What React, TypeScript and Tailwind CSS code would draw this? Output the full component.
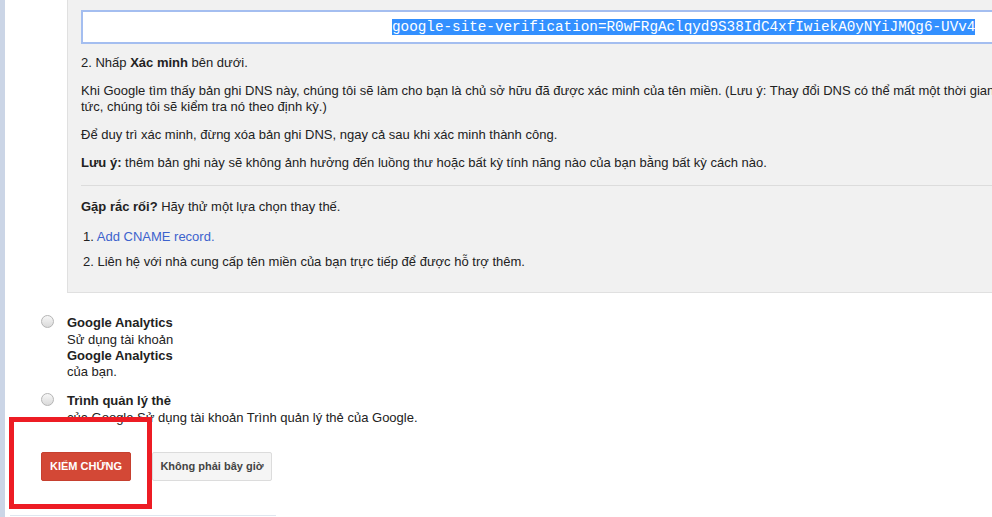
const TXT_RECORD = "google-site-verification=R0wFRgAclqyd9S38IdC4xfIwiekA0yNYiJMQg6-UVv4";

export default function App() {
  return (
    <div className="relative flex h-[517px] w-full overflow-hidden bg-white font-['Liberation_Sans',Arial,sans-serif] text-[13px] text-[#222]">
      <div className="w-[5px] shrink-0 bg-[#cbd5e6]" />
      <main className="min-w-0 flex-1">
        <VerifyPanel />
        <MethodList />
        <div className="mt-[26px] flex gap-[21px] pl-[36px]">
          <button className="h-[29px] w-[90px] rounded-[2px] border border-[#c6402f] bg-[#d34836] text-[11px] font-bold text-white">
            KIỂM CHỨNG
          </button>
          <button className="h-[29px] w-[120px] rounded-[2px] border border-[#dcdcdc] bg-[#f5f5f5] text-[11px] font-bold text-[#444]">
            Không phải bây giờ
          </button>
        </div>
        <div className="ml-[5px] mt-[34px] w-[266px] border-t border-[#dfe6ef]" />
      </main>

      {/* annotation box drawn over the page */}
      <div className="pointer-events-none absolute left-[9px] top-[417px] h-[92px] w-[143px] border-[5px] border-[#ed1c24]" />
    </div>
  );
}

function VerifyPanel() {
  return (
    <section className="ml-[62px] overflow-hidden border-b border-l border-[#e0e0e0] bg-[#f1f1f1] pb-[22px] pl-[13px] pt-[10px]">
      <div className="-mr-5 flex h-[34px] items-center whitespace-nowrap border-2 border-[#a4bef0] bg-white pl-[309px]">
        <span className="bg-[#3390ff] font-['Liberation_Mono','Courier_New',monospace] text-[14.3px] leading-[16px] text-white">
          {TXT_RECORD}
        </span>
      </div>

      <p className="mt-[11px] leading-[16px]">
        2. Nhấp <b>Xác minh</b> bên dưới.
      </p>
      <div className="mt-[12px] whitespace-nowrap leading-[16px]">
        <p>
          Khi Google tìm thấy bản ghi DNS này, chúng tôi sẽ làm cho bạn là chủ sở hữu đã được xác minh của tên miền. (Lưu ý: Thay đổi DNS có thể mất một thời gian để có hiệu lực. Nếu chúng tôi không tìm thấy bản ghi ngay lập
        </p>
        <p>tức, chúng tôi sẽ kiểm tra nó theo định kỳ.)</p>
      </div>
      <p className="mt-[12px] leading-[16px]">
        Để duy trì xác minh, đừng xóa bản ghi DNS, ngay cả sau khi xác minh thành công.
      </p>
      <p className="mt-[12px] leading-[16px]">
        <b>Lưu ý:</b> thêm bản ghi này sẽ không ảnh hưởng đến luồng thư hoặc bất kỳ tính năng nào của bạn bằng bất kỳ cách nào.
      </p>

      <div className="mt-[14px] h-px bg-[#dcdcdc]" />

      <p className="mt-[13px] leading-[16px]">
        <b>Gặp rắc rối?</b> Hãy thử một lựa chọn thay thế.
      </p>
      <ol className="mt-[14px] grid gap-[9px] pl-[2px] leading-[16px]">
        <li>
          1. <a className="text-[#3c62cd]">Add CNAME record.</a>
        </li>
        <li>2. Liên hệ với nhà cung cấp tên miền của bạn trực tiếp để được hỗ trợ thêm.</li>
      </ol>
    </section>
  );
}

function MethodList() {
  return (
    <div className="mt-[21px] grid gap-[12px] pl-[36px]">
      <RadioItem title="Google Analytics">
        <p className="leading-[17px]">Sử dụng tài khoản</p>
        <p className="font-bold leading-[15px]">Google Analytics</p>
        <p className="leading-[17px]">của bạn.</p>
      </RadioItem>
      <RadioItem title="Trình quản lý thẻ">
        <p className="leading-[17px]">của Google Sử dụng tài khoản Trình quản lý thẻ của Google.</p>
      </RadioItem>
    </div>
  );
}

type RadioItemProps = {
  title: string;
  children: React.ReactNode;
};

function RadioItem({ title, children }: RadioItemProps) {
  return (
    <div className="flex items-start gap-[13px]">
      <span className="mt-[1px] h-[13px] w-[13px] shrink-0 rounded-full border border-[#b5b5b5] bg-linear-to-b from-[#f7f7f7] to-[#dadada]" />
      <div>
        <p className="font-bold leading-[17px]">{title}</p>
        {children}
      </div>
    </div>
  );
}
